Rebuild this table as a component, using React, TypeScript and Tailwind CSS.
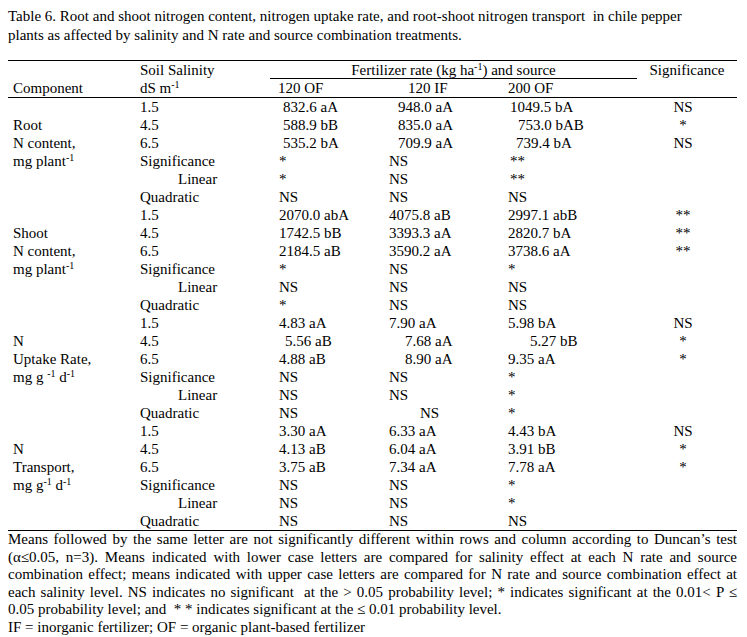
import React from 'react';

type Cell = [string, string?];

// one row: component label, salinity label, 3 fertilizer cells, significance
type Row = {
  comp?: React.ReactNode;
  sal: Cell;
  c1: Cell;
  c2: Cell;
  c3: Cell;
  sig?: string;
};

const Sup = ({ children }: { children: React.ReactNode }) => (
  <sup className="text-[10px]">{children}</sup>
);

const plant = (
  <>
    mg plant<Sup>-1</Sup>
  </>
);

const rows: Row[] = [
  // Root
  { sal: ['1.5'], c1: ['832.6 aA', 'pl-[13px]'], c2: ['948.0 aA', 'pl-[9px]'], c3: ['1049.5 bA', 'pl-[2px]'], sig: 'NS' },
  { comp: 'Root', sal: ['4.5'], c1: ['588.9 bB', 'pl-[13px]'], c2: ['835.0 aA', 'pl-[9px]'], c3: ['753.0 bAB', 'pl-[10px]'], sig: '*' },
  { comp: 'N content,', sal: ['6.5'], c1: ['535.2 bA', 'pl-[13px]'], c2: ['709.9 aA', 'pl-[9px]'], c3: ['739.4 bA', 'pl-[8px]'], sig: 'NS' },
  { comp: plant, sal: ['Significance'], c1: ['*'], c2: ['NS'], c3: ['**', 'pl-[2px]'] },
  { sal: ['Linear', 'pl-[38px]'], c1: ['*'], c2: ['NS'], c3: ['**', 'pl-[2px]'] },
  { sal: ['Quadratic'], c1: ['NS'], c2: ['NS'], c3: ['NS'] },
  // Shoot
  { sal: ['1.5'], c1: ['2070.0 abA'], c2: ['4075.8 aB'], c3: ['2997.1 abB'], sig: '**' },
  { comp: 'Shoot', sal: ['4.5'], c1: ['1742.5 bB'], c2: ['3393.3 aA'], c3: ['2820.7 bA'], sig: '**' },
  { comp: 'N content,', sal: ['6.5'], c1: ['2184.5 aB'], c2: ['3590.2 aA'], c3: ['3738.6 aA'], sig: '**' },
  { comp: plant, sal: ['Significance'], c1: ['*'], c2: ['NS'], c3: ['*'] },
  { sal: ['Linear', 'pl-[38px]'], c1: ['NS'], c2: ['NS'], c3: ['NS'] },
  { sal: ['Quadratic'], c1: ['*'], c2: ['NS'], c3: ['NS'] },
  // Uptake
  { sal: ['1.5'], c1: ['4.83 aA'], c2: ['7.90 aA'], c3: ['5.98 bA'], sig: 'NS' },
  { comp: 'N', sal: ['4.5'], c1: ['5.56 aB', 'pl-[15px]'], c2: ['7.68 aA', 'pl-[16px]'], c3: ['5.27 bB', 'pl-[22px]'], sig: '*' },
  { comp: 'Uptake Rate,', sal: ['6.5'], c1: ['4.88 aB'], c2: ['8.90 aA', 'pl-[16px]'], c3: ['9.35 aA'], sig: '*' },
  {
    comp: (
      <>
        mg g <Sup>-1</Sup> d<Sup>-1</Sup>
      </>
    ),
    sal: ['Significance'], c1: ['NS'], c2: ['NS'], c3: ['*'],
  },
  { sal: ['Linear', 'pl-[38px]'], c1: ['NS'], c2: ['NS'], c3: ['*'] },
  { sal: ['Quadratic'], c1: ['NS'], c2: ['NS', 'pl-[31px]'], c3: ['*'] },
  // Transport
  { sal: ['1.5'], c1: ['3.30 aA'], c2: ['6.33 aA'], c3: ['4.43 bA'], sig: 'NS' },
  { comp: 'N', sal: ['4.5'], c1: ['4.13 aB'], c2: ['6.04 aA'], c3: ['3.91 bB'], sig: '*' },
  { comp: 'Transport,', sal: ['6.5'], c1: ['3.75 aB'], c2: ['7.34 aA'], c3: ['7.78 aA'], sig: '*' },
  {
    comp: (
      <>
        mg g<Sup>-1</Sup> d<Sup>-1</Sup>
      </>
    ),
    sal: ['Significance'], c1: ['NS'], c2: ['NS'], c3: ['*'],
  },
  { sal: ['Linear', 'pl-[38px]'], c1: ['NS'], c2: ['NS'], c3: ['*'] },
  { sal: ['Quadratic'], c1: ['NS'], c2: ['NS'], c3: ['NS'] },
];

const cols = 'grid grid-cols-[132px_130px_119px_119px_129px_100px]';

function DataRow({ row }: { row: Row }) {
  return (
    <div className={`${cols} h-[18px] leading-[18px] whitespace-nowrap`}>
      <div className="pl-[5px]">{row.comp}</div>
      <div className={row.sal[1]}>{row.sal[0]}</div>
      <div className={row.c1[1] ?? 'pl-[9px]'}>{row.c1[0]}</div>
      <div className={row.c2[1]}>{row.c2[0]}</div>
      <div className={row.c3[1]}>{row.c3[0]}</div>
      <div className="text-center pr-[8px]">{row.sig}</div>
    </div>
  );
}

export default function App() {
  return (
    <div className="w-[747px] h-[637px] bg-white text-black font-['Liberation_Serif',serif] text-[15px] pl-[8px] pr-[10px] pt-[7px] overflow-hidden">
      {/* Caption */}
      <p className="leading-[19px]">
        Table 6. Root and shoot nitrogen content, nitrogen uptake rate, and root-shoot nitrogen transport&nbsp; in chile pepper
        <br />
        plants as affected by salinity and N rate and source combination treatments.
      </p>

      {/* Table */}
      <div className="mt-[15px] border-t border-black">
        <div className={`${cols} leading-[18px] whitespace-nowrap`}>
          <div className="pl-[5px] pt-[18px] h-[36px]">Component</div>
          <div className="h-[36px]">
            <div className="h-[18px]">Soil Salinity</div>
            <div className="h-[18px]">
              dS m<Sup>-1</Sup>
            </div>
          </div>
          <div className="col-span-3 h-[36px]">
            <div className="h-[18px] border-b border-black text-center">
              Fertilizer rate (kg ha<Sup>-1</Sup>) and source
            </div>
            <div className="grid grid-cols-[119px_119px_129px] h-[17px]">
              <div className="pl-[8px]">120 OF</div>
              <div className="pl-[19px]">120 IF</div>
              <div>200 OF</div>
            </div>
          </div>
          <div className="h-[36px] text-center">Significance</div>
        </div>

        <div className="border-t border-black border-b">
          {rows.map((r, i) => (
            <DataRow key={i} row={r} />
          ))}
        </div>
      </div>

      {/* Footnote */}
      <div className="leading-[17.5px]">
        <p className="text-justify [text-align-last:justify]">
          Means followed by the same letter are not significantly different within rows and column according to Duncan’s test
        </p>
        <p className="text-justify [text-align-last:justify]">
          (α≤0.05, n=3). Means indicated with lower case letters are compared for salinity effect at each N rate and source
        </p>
        <p className="text-justify [text-align-last:justify]">
          combination effect; means indicated with upper case letters are compared for N rate and source combination effect at
        </p>
        <p className="text-justify [text-align-last:justify]">
          each salinity level. NS indicates no significant&nbsp; at the &gt; 0.05 probability level; * indicates significant at the 0.01&lt; P ≤
        </p>
        <p>0.05 probability level; and&nbsp; * * indicates significant at the ≤ 0.01 probability level.</p>
        <p>IF = inorganic fertilizer; OF = organic plant-based fertilizer</p>
      </div>
    </div>
  );
}
